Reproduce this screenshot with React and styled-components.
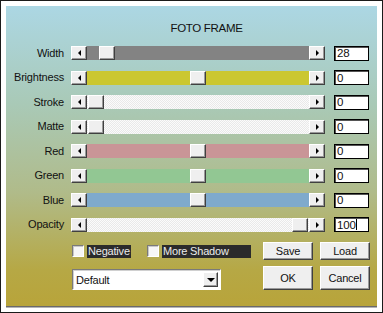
import React from 'react';
import styled, { createGlobalStyle } from 'styled-components';

const GlobalStyle = createGlobalStyle`
  html, body {
    margin: 0;
    padding: 0;
    background: #fff;
  }
  * {
    box-sizing: border-box;
  }
`;

const Frame = styled.div`
  width: 383px;
  height: 313px;
  border: 1px solid #1a1a1a;
  background: #fff;
  padding: 5px;
  display: flex;
  font-family: "Liberation Sans", Arial, sans-serif;
  font-size: 11px;
  letter-spacing: -0.2px;
  color: #111;
`;

const Panel = styled.div`
  flex: 1;
  display: flex;
  flex-direction: column;
  background: linear-gradient(to bottom, #acd7e4 0%, #a9c9b6 33%, #b0bb8a 62%, #b6a845 88%, #b8a43a 100%);
  border-bottom: 1px solid #6a6a6a;
  box-shadow: 0 1px 0 #b4b4b4;
`;

const Title = styled.div`
  height: 14px;
  line-height: 14px;
  margin-top: 15px;
  margin-bottom: 10.5px;
  padding-left: 30px;
  text-align: center;
  font-size: 11.5px;
  letter-spacing: -0.3px;
`;

const Rows = styled.div`
  display: grid;
  grid-template-columns: 65px 254px 44px;
  grid-auto-rows: 15px;
  row-gap: 9.5px;
  align-items: center;
`;

const Label = styled.div`
  text-align: right;
  padding-right: 7px;
  line-height: 15px;
  white-space: nowrap;
`;

const Bar = styled.div`
  display: flex;
  height: 14px;
`;

const raised = `
  background: #efefef;
  border: 1px solid;
  border-color: #fff #404040 #404040 #fff;
  box-shadow: inset -1px -1px 0 #9a9a9a;
`;

const ArrowButton = styled.div`
  ${raised}
  width: 16px;
  height: 14px;
  display: flex;
  align-items: center;
  justify-content: center;
  flex: none;

  &::after {
    content: '';
    width: 0;
    height: 0;
    border-top: 3px solid transparent;
    border-bottom: 3px solid transparent;
    ${p => (p.$dir === 'left' ? 'border-right: 3px solid #000;' : 'border-left: 3px solid #000;')}
  }
`;

const Track = styled.div`
  flex: 1;
  display: flex;
  background: ${p => p.$color};
  ${p =>
    p.$dither &&
    `background: repeating-conic-gradient(#fbfbfb 0 25%, #e9e9e9 0 50%) 0 0 / 2px 2px;`}
`;

const Thumb = styled.div`
  ${raised}
  width: 16px;
  height: 14px;
  margin-left: ${p => p.$pos}px;
`;

const ValueBox = styled.div`
  width: 35px;
  height: 15px;
  margin-left: 9px;
  background: #fff;
  border: 1px solid #000;
  box-shadow: inset 1px 1px 0 #555;
  padding-left: 2px;
  font-size: 11.5px;
  display: flex;
  align-items: center;
`;

const Caret = styled.span`
  display: inline-block;
  width: 1px;
  height: 11px;
  background: #000;
`;

const Bottom = styled.div`
  display: grid;
  grid-template-columns: 184px 50px 50px;
  grid-template-rows: 18px 24px;
  column-gap: 7px;
  row-gap: 6px;
  margin-top: 10px;
  padding-left: 66px;
`;

const CheckRow = styled.div`
  display: flex;
  align-items: center;
  gap: 16px;
`;

const Check = styled.div`
  display: flex;
  align-items: center;
  gap: 3px;
`;

const Box = styled.div`
  width: 12px;
  height: 12px;
  background: #f6f6f6;
  border: 1px solid;
  border-color: #7a7a7a #fff #fff #7a7a7a;
  box-shadow: inset 1px 1px 0 #c8c8c8;
`;

const CheckText = styled.span`
  background: #2b2b2b;
  color: #ececec;
  height: 13px;
  line-height: 13px;
  padding: 0 1px;
  white-space: nowrap;
  width: ${p => p.$w}px;
`;

const Button = styled.div`
  ${raised}
  display: flex;
  align-items: center;
  justify-content: center;
  height: ${p => p.$h}px;
`;

const Select = styled.div`
  width: 149px;
  height: 21px;
  margin-top: 3px;
  background: #fff;
  border: 1px solid;
  border-color: #7a7a7a #fff #fff #7a7a7a;
  box-shadow: inset 1px 1px 0 #d0d0d0;
  display: flex;
  align-items: center;
  justify-content: space-between;
  padding: 0 2px 0 3px;
`;

const SelectButton = styled.div`
  ${raised}
  width: 15px;
  height: 15px;
  display: flex;
  align-items: center;
  justify-content: center;

  &::after {
    content: '';
    border-left: 4px solid transparent;
    border-right: 4px solid transparent;
    border-top: 4px solid #000;
  }
`;

const sliders = [
  { label: 'Width', color: '#838383', pos: 12, value: '28' },
  { label: 'Brightness', color: '#cbc730', pos: 103, value: '0' },
  { label: 'Stroke', dither: true, pos: 1, value: '0' },
  { label: 'Matte', dither: true, pos: 1, value: '0' },
  { label: 'Red', color: '#c99597', pos: 103, value: '0' },
  { label: 'Green', color: '#92c793', pos: 103, value: '0' },
  { label: 'Blue', color: '#7faacc', pos: 103, value: '0' },
  { label: 'Opacity', dither: true, pos: 205, value: '100', caret: true },
];

const Slider = ({ s }) => (
  <>
    <Label>{s.label}</Label>
    <Bar>
      <ArrowButton $dir="left" />
      <Track $color={s.color} $dither={s.dither}>
        <Thumb $pos={s.pos} />
      </Track>
      <ArrowButton $dir="right" />
    </Bar>
    <ValueBox>
      {s.value}
      {s.caret && <Caret />}
    </ValueBox>
  </>
);

export default function App() {
  return (
    <>
      <GlobalStyle />
      <Frame>
        <Panel>
          <Title>FOTO FRAME</Title>
          <Rows>
            {sliders.map(s => (
              <Slider key={s.label} s={s} />
            ))}
          </Rows>
          <Bottom>
            <CheckRow>
              <Check>
                <Box />
                <CheckText $w={44}>Negative</CheckText>
              </Check>
              <Check>
                <Box />
                <CheckText $w={89}>More Shadow</CheckText>
              </Check>
            </CheckRow>
            <Button $h={18}>Save</Button>
            <Button $h={18}>Load</Button>
            <Select>
              <span>Default</span>
              <SelectButton />
            </Select>
            <Button $h={24}>OK</Button>
            <Button $h={24}>Cancel</Button>
          </Bottom>
        </Panel>
      </Frame>
    </>
  );
}
